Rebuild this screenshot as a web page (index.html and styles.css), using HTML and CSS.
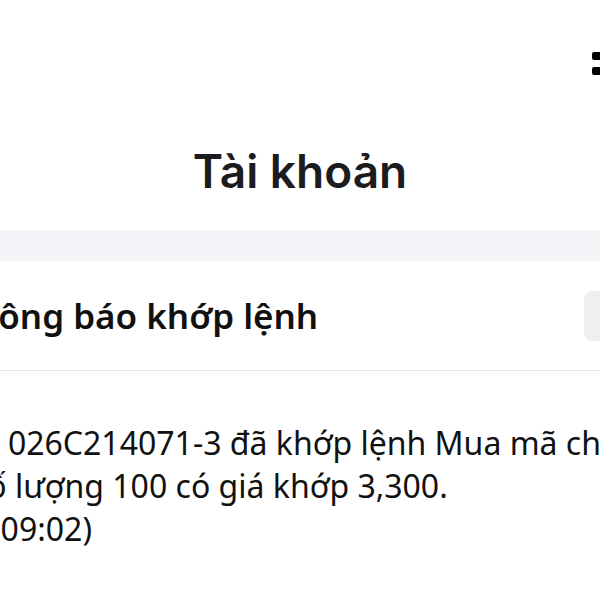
FILE: index.html
```html
<!DOCTYPE html>
<html lang="vi">
  <head>
    <meta charset="UTF-8" />
    <meta name="viewport" content="width=device-width, initial-scale=1.0" />
    <title>Tài khoản</title>
    <link rel="stylesheet" href="styles.css">
  </head>
  <body>
    <div class="status">
      <div class="signal">
        <span></span>
        <span></span>
      </div>
    </div>
    <div class="header">
      <h1>Tài khoản</h1>
    </div>
    <div class="gap"></div>
    <div class="row">
      <h2>Thông báo khớp lệnh</h2>
      <div class="toggle"></div>
    </div>
    <div class="msg">
      <p class="line line-acc">TK 026C214071-3 đã khớp lệnh Mua mã chứng khoán HQC</p>
      <p class="line line-qty">số lượng 100 có giá khớp 3,300.</p>
      <p class="line line-time">(09:02)</p>
    </div>
  </body>
</html>
```

FILE: styles.css
```css
* {
  padding: 0;
  margin: 0;
  box-sizing: border-box;
}
html,
body {
  width: 600px;
  height: 600px;
  overflow: hidden;
  background: #fff;
}
body {
  font-family: "Noto Sans", "Open Sans", sans-serif;
  color: #111;
}
.status {
  height: 143px;
  display: flex;
  justify-content: flex-end;
  padding-top: 52px;
  margin-right: -8px;
}
.signal {
  display: flex;
  flex-direction: column;
  gap: 7px;
}
.signal span {
  display: block;
  width: 16px;
  height: 8px;
  border-radius: 2px;
  background: #000;
}
.header {
  text-align: center;
}
.header h1 {
  font-family: Inter, "Liberation Sans", sans-serif;
  font-weight: 600;
  font-size: 46px;
  line-height: 56px;
  color: #1c1c1e;
}
.gap {
  height: 31px;
  margin-top: 31px;
  background: #f4f4f9;
}
.row {
  height: 110px;
  display: flex;
  align-items: center;
  justify-content: space-between;
  border-bottom: 1px solid #e4e4e6;
  margin-left: -44px;
  margin-right: -40px;
}
.row h2 {
  font-size: 35px;
  font-weight: 600;
  line-height: 48px;
}
.toggle {
  width: 56px;
  height: 50px;
  border-radius: 9px;
  background: #efeff0;
}
.msg {
  margin-top: 50px;
  white-space: nowrap;
}
.line {
  font-size: 32px;
  line-height: 43px;
}
.line-acc {
  margin-left: -38px;
}
.line-qty {
  margin-left: -28px;
}
.line-time {
  margin-left: -9px;
}
```
